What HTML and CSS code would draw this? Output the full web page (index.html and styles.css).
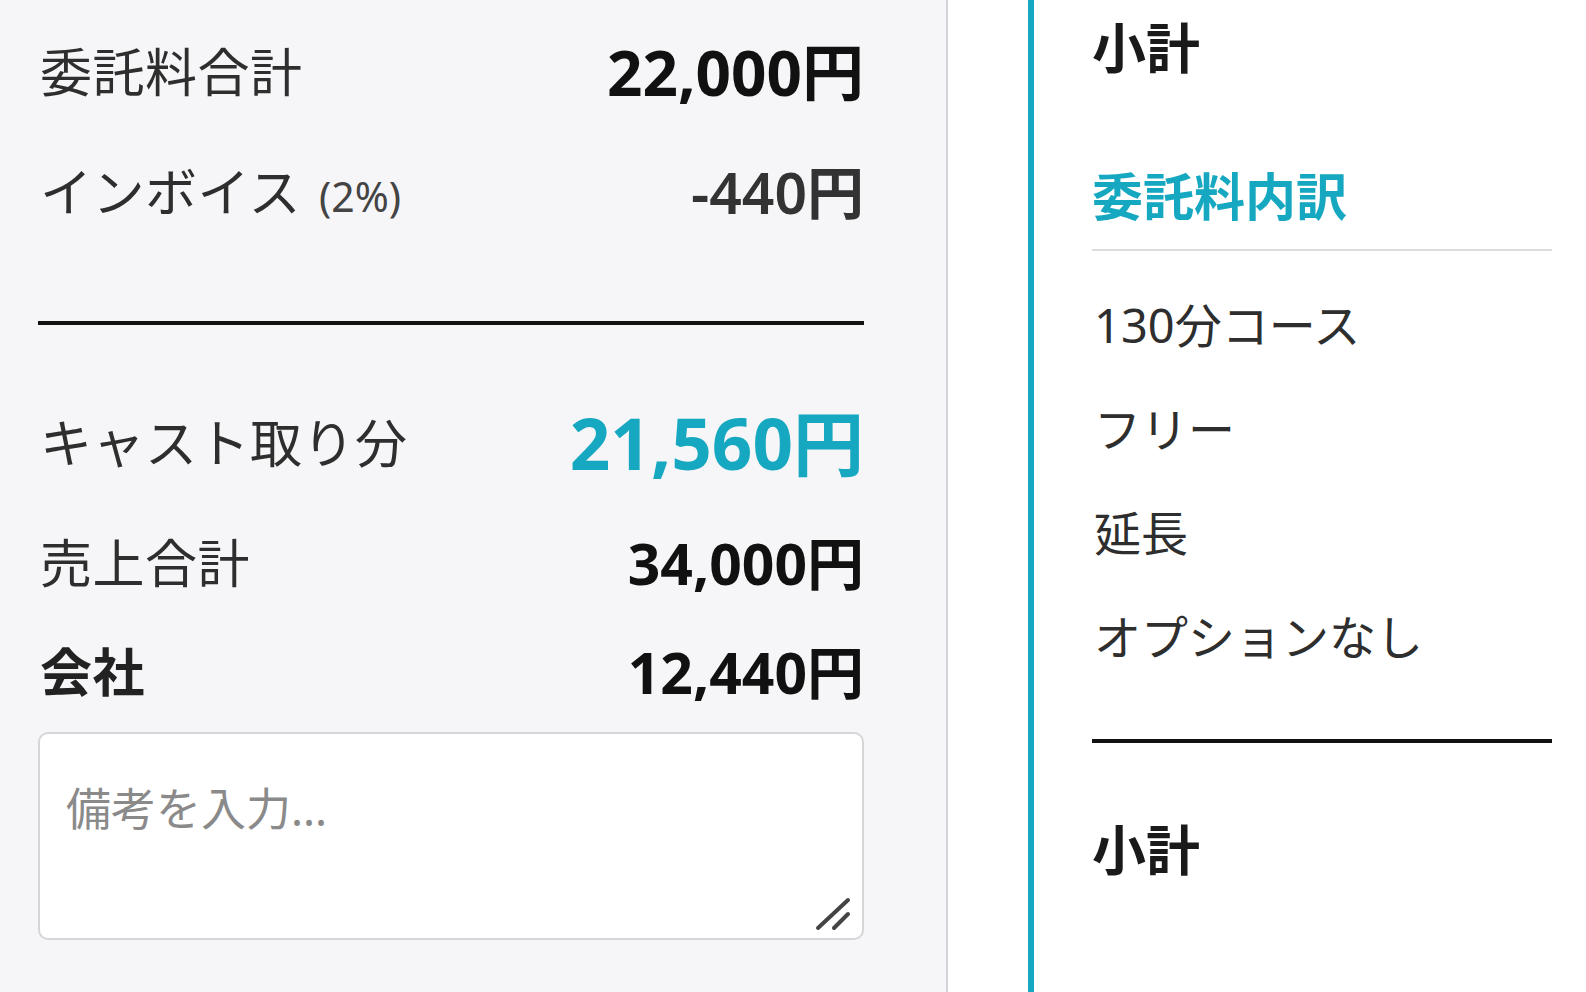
FILE: index.html
```html
<!DOCTYPE html>
<html lang="ja">
<head>
<meta charset="utf-8">
<title>精算</title>
<link rel="stylesheet" href="styles.css">
</head>
<body>
<div class="page">
  <section class="summary">
    <div class="row r1">
      <span class="label">委託料合計</span>
      <span class="value bold lg">22,000円</span>
    </div>
    <div class="row r2">
      <span class="label">インボイス <small class="pct">(2%)</small></span>
      <span class="value medium">-440円</span>
    </div>
    <div class="divider"></div>
    <div class="row r3">
      <span class="label">キャスト取り分</span>
      <span class="value big">21,560円</span>
    </div>
    <div class="row r4">
      <span class="label">売上合計</span>
      <span class="value bold">34,000円</span>
    </div>
    <div class="row r5">
      <span class="label strong">会社</span>
      <span class="value bold">12,440円</span>
    </div>
    <div class="memo">
      <textarea class="memo-input" placeholder="備考を入力..."></textarea>
      <svg class="grip" width="40" height="40" viewBox="0 0 40 40">
        <path d="M4 34 L34 6" stroke="#444" stroke-width="4" stroke-linecap="round"/>
        <path d="M20 34 L34 20" stroke="#444" stroke-width="4" stroke-linecap="round"/>
      </svg>
    </div>
  </section>
  <div class="gutter"></div>
  <section class="detail">
    <h2 class="sub first">小計</h2>
    <h3 class="section-title">委託料内訳</h3>
    <ul class="items">
      <li>130分コース</li>
      <li>フリー</li>
      <li>延長</li>
      <li>オプションなし</li>
    </ul>
    <div class="detail-divider"></div>
    <h2 class="sub">小計</h2>
  </section>
</div>
</body>
</html>
```
FILE: styles.css
```css
* { box-sizing: border-box; }
html, body {
  margin: 0;
  padding: 0;
  height: 100%;
  background: #ffffff;
  font-family: "Noto Sans", "Noto Sans CJK JP", sans-serif;
  color: #222;
  overflow: hidden;
}
.page {
  display: flex;
  height: 992px;
}
.summary {
  width: 948px;
  flex: none;
  background: #f6f6f8;
  border-right: 2px solid #d4d4d8;
  padding: 12px 82px 0 38px;
  display: flex;
  flex-direction: column;
}
.row {
  display: flex;
  align-items: center;
  justify-content: space-between;
  flex: none;
}
.r1, .r2 { height: 120px; }
.r3 { height: 120px; margin-top: 58px; }
.r4 { height: 120px; }
.r5 { height: 98px; }
.label {
  font-size: 52px;
  color: #2e2e2e;
  padding-left: 2px;
  letter-spacing: 0.5px;
  line-height: 1.2;
}
.label.strong { font-weight: 700; color: #222; }
.pct {
  font-size: 41px;
  color: #444;
  letter-spacing: 0;
  margin-left: 4px;
}
.value {
  font-size: 57px;
  color: #111;
  line-height: 1.2;
}
.value.lg { font-size: 62px; }
.value.bold { font-weight: 700; }
.value.medium { font-weight: 600; color: #333; }
.value.big {
  font-size: 71px;
  font-weight: 700;
  color: #16a8c0;
}
.divider {
  height: 4px;
  margin-top: 69px;
  background: #111;
  flex: none;
}
.memo {
  position: relative;
  margin-top: 11px;
  height: 208px;
  flex: none;
}
.memo-input {
  width: 100%;
  height: 100%;
  border: 2px solid #d6d6d8;
  border-radius: 10px;
  background: #fff;
  resize: none;
  padding: 40px 26px;
  font-family: "Noto Sans", "Noto Sans CJK JP", sans-serif;
  font-size: 45px;
  color: #333;
  outline: none;
}
.memo-input::placeholder { color: #8a8a8a; }
.grip {
  position: absolute;
  right: 10px;
  bottom: 6px;
}
.gutter {
  width: 80px;
  flex: none;
  background: #fff;
}
.detail {
  flex: 1;
  border-left: 6px solid #16a8c0;
  padding: 0 34px 0 58px;
  display: flex;
  flex-direction: column;
}
.sub {
  margin: 0;
  height: 96px;
  line-height: 96px;
  font-size: 54px;
  font-weight: 700;
  color: #1a1a1a;
  flex: none;
}
.section-title {
  margin: 52px 0 0;
  height: 103px;
  line-height: 96px;
  font-size: 51px;
  font-weight: 700;
  color: #16a8c0;
  border-bottom: 2px solid #dcdcde;
  flex: none;
}
.items {
  list-style: none;
  margin: 22px 0 0;
  padding: 0;
}
.items li {
  height: 104px;
  line-height: 104px;
  font-size: 47px;
  color: #2e2e2e;
  padding-left: 2px;
}
.detail-divider {
  height: 4px;
  background: #111;
  margin-top: 50px;
  flex: none;
}
.detail-divider + .sub { margin-top: 59px; }
```
